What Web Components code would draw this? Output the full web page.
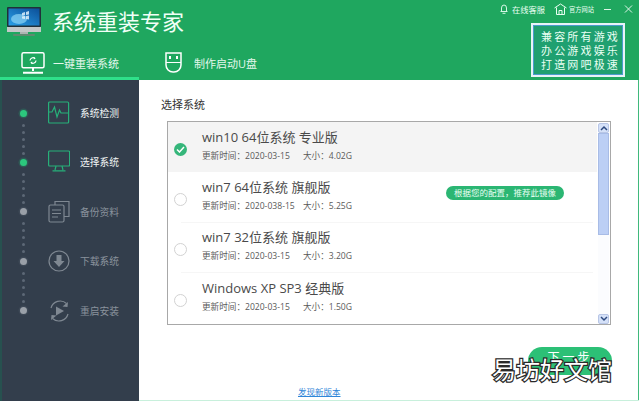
<!DOCTYPE html>
<html lang="zh"><head><meta charset="utf-8"><title>系统重装专家</title>
<style>
html,body{margin:0;padding:0;background:#fff}
body{width:639px;height:401px;overflow:hidden;font-family:"Open Sans","Noto Sans CJK SC",sans-serif}
</style></head><body>
<installer-app>
  <app-header slot="header"></app-header>
  <side-nav slot="nav"></side-nav>
  <system-panel slot="main">
    <system-row slot="rows" selected name="win10 64位系统 专业版" date="2020-03-15" size="4.02G"></system-row>
    <system-row slot="rows" name="win7 64位系统 旗舰版" date="2020-038-15" size="5.25G" badge="根据您的配置，推荐此镜像"></system-row>
    <system-row slot="rows" name="win7 32位系统 旗舰版" date="2020-03-15" size="3.20G"></system-row>
    <system-row slot="rows" last name="Windows XP SP3 经典版" date="2020-03-15" size="1.50G"></system-row>
  </system-panel>
</installer-app>
<script>
const FONT='"Open Sans","Noto Sans CJK SC",sans-serif';
class InstallerApp extends HTMLElement{constructor(){super();this.attachShadow({mode:'open'}).innerHTML=`<style>
:host{display:grid;grid-template-columns:139px 1fr;grid-template-rows:80px 321px;width:639px;height:401px;position:relative;overflow:hidden;background:#fff}
.h{grid-column:1/3;display:block}
.edge{position:absolute;right:0;top:80px;bottom:0;width:1px;background:#3fb97c}
.bot{position:absolute;left:139px;right:0;bottom:0;height:1px;background:#c8f0dc}
.wm{position:absolute;left:492px;top:354px;font:24px/30px "Noto Sans CJK SC",sans-serif;color:#fff;-webkit-text-stroke:2.500px #2a2a2a;paint-order:stroke fill;white-space:nowrap}
</style><div class="h"><slot name="header"></slot></div><slot name="nav"></slot><slot name="main"></slot><div class="edge"></div><div class="bot"></div><div class="wm">易坊好文馆</div>`}}
customElements.define('installer-app',InstallerApp);

class AppHeader extends HTMLElement{constructor(){super();this.attachShadow({mode:'open'}).innerHTML=`<style>
:host{display:flex;height:80px;background:#1fa75f;color:#fff;font-family:${FONT};box-sizing:border-box;justify-content:space-between}
.left{display:flex;flex-direction:column;width:400px}
.brand{display:flex;align-items:center;height:42px;padding:0 0 0 7px;box-sizing:border-box;gap:11px}
.brand b{font-weight:400;font-size:22px;line-height:30px;color:#f1fff7}
.tabs{display:flex;height:38px}
.tab{display:flex;align-items:center;box-sizing:border-box;font-size:11px;color:#e4f7ec}
.t1{width:139px;height:38px;padding:7px 0 0 21px;gap:8px;border-bottom:3px solid #2fe08a}
.t2{padding:3px 0 0 26px;gap:12px}
.right{display:flex;flex-direction:column;align-items:flex-end;width:200px}
.top{display:flex;align-items:center;height:18px;padding-right:6px;font-size:8.250px;color:#eafff3}
.top span{display:inline-flex;align-items:center}
.top .a{margin-right:9px;gap:4px}.top .b{margin-right:10px;font-size:6.250px;gap:2px}
.top .min{width:7px;height:1px;background:#dff5e8;margin-right:13px}
.promo{margin:5px 14px 0 0;width:94px;height:54px;box-sizing:border-box;border:2px solid #e6f3f8;outline:1.500px solid #4a9ccc;outline-offset:-3.500px;background:#1fa070;font-size:11px;line-height:14px;text-align:center;padding:5px 0 0 2px;letter-spacing:2.150px;color:#eafff3;white-space:nowrap}
.promo div{margin-right:-3px}
</style>
<div class="left"><div class="brand">
<svg width="34" height="29" viewBox="0 0 34 29"><rect x="0" y="0" width="34" height="20" rx="1" fill="#20303a"/><defs><linearGradient id="s" x1="0" y1="1" x2="1" y2="0"><stop offset="0" stop-color="#2aa0e8"/><stop offset="1" stop-color="#0c4f98"/></linearGradient></defs><rect x="1.500" y="1.500" width="31" height="17" fill="url(#s)"/><ellipse cx="12" cy="12" rx="8" ry="5" fill="#8fd6f6" opacity=".7"/><path d="M15 6l3-1v3l-3 .5zM19 5l3-1v3.500l-3 .5zM15 9.500l3-.5v3l-3-.5zM19 9l3-.5v4l-3-.5z" fill="#e8f6ff" opacity=".8"/><rect x="0" y="20" width="34" height="5" fill="#c4c8c8"/><rect x="13" y="25" width="8" height="2" fill="#aeb4b2"/><rect x="6" y="27" width="22" height="2" rx="1" fill="#5f8a70"/></svg>
<b>系统重装专家</b></div>
<div class="tabs"><div class="tab t1"><svg width="24" height="22" viewBox="0 0 24 22" fill="none" stroke="#fff" stroke-width="1.500"><rect x="1" y=".8" width="22" height="15" rx="1.500"/><path d="M12 16v3M2 20.800h20" stroke-width="2"/><path d="M9 8.500a3 3 0 0 1 5-2M15 8.500a3 3 0 0 1-5 2" stroke-width="1.200"/><path d="M13.500 5l1 2-2 .2zM10.500 12l-1-2 2-.2z" fill="#fff" stroke="none"/></svg><span>一键重装系统</span></div>
<div class="tab t2"><svg width="17" height="21" viewBox="0 0 17 21" fill="none" stroke="#fff" stroke-width="1.500"><path d="M1 1h15v12a7 7 0 0 1-7 7h-1a7 7 0 0 1-7-7z"/><path d="M1 10.500h15" stroke-width="1"/><path d="M5 4v3M12 4v3" stroke-width="2"/></svg><span>制作启动U盘</span></div></div></div>
<div class="right"><div class="top"><span class="a"><svg width="8" height="10" viewBox="0 0 8 10" fill="none" stroke="#eafff3" stroke-width=".9"><path d="M1.500 7V4a2.500 3 0 0 1 5 0v3M.500 7.500h7M2.500 9.300h3"/></svg>在线客服</span><span class="b"><svg width="13" height="12" viewBox="0 0 13 12" fill="none" stroke="#eafff3"><path d="M.500 5L6.500 1l6 4M2.500 4.500v7h8v-7M5 11V7.500h3V11"/></svg>官方网站</span><i class="min"></i><svg width="9" height="8" viewBox="0 0 9 8" stroke="#dff5e8" stroke-width="1"><path d="M1 .5l7 7M8 .5l-7 7"/></svg></div>
<div class="promo"><div>兼容所有游戏</div><div>办公游戏娱乐</div><div>打造网吧极速</div></div></div>`}}
customElements.define('app-header',AppHeader);

const ICONS={
check:`<rect x=".6" y="1" width="20" height="21" rx="1"/><path d="M.6 11H4l2.500-5 2.500 10 2.500-7 1.500 3h7.600"/>`,
mon:`<rect x=".6" y="1" width="21" height="15" rx="1"/><path d="M8 16l-1 4M14 16l1 4M4.500 20.800h13"/>`,
copy:`<path d="M7 5V1.500h14v15h-5"/><rect x="1" y="5" width="15" height="17" rx="1.500"/><path d="M4 10h9M4 13.500h9M4 17h6"/>`,
down:`<circle cx="11" cy="12" r="10"/><path d="M8.500 6h5v6h3l-5.500 6-5.500-6h3z" fill="currentColor" stroke="none"/>`,
play:`<path d="M3 9a9.500 9.500 0 0 1 15.500-4.500M20 15a9.500 9.500 0 0 1-15.500 4.500"/><path d="M20 3l-.5 5-5-.5zM3 21l.5-5 5 .5z" fill="currentColor" stroke="none"/><path d="M8 7.500l8 4.500-8 4.500z" fill="currentColor" stroke="none"/>`};
class SideNav extends HTMLElement{constructor(){super();
const items=[['系统检测','check',1],['选择系统','mon',1],['备份资料','copy',0],['下载系统','down',0],['重启安装','play',0]];
const r=this.attachShadow({mode:'open'});
r.innerHTML=`<style>
:host{display:block;background:#333e4c;border-left:2px solid #27514f;box-sizing:border-box;font-family:${FONT};height:321px;padding-top:20px}
.item{display:flex;align-items:center;height:26px;margin-bottom:23.400px;font-size:9.750px;color:#8a929c;position:relative}
.on{color:#f0f4f4}
.dot{width:7px;height:7px;border-radius:50%;background:#9aa0a8;margin-left:17.500px;box-shadow:0 0 0 1.500px #3d4856;flex:none}
.on .dot{background:#2cc77d;box-shadow:0 0 0 1.500px #2f5a56}
svg{margin-left:21.500px;margin-right:10px;color:#7f8892;stroke:#7f8892;flex:none}
.on svg{color:#27b079;stroke:#27b079}
.trail{position:absolute;left:19.500px;top:23.500px;display:flex;flex-direction:column;gap:4px}
.trail i{display:block;width:3px;height:3px;border-radius:50%;background:#5d6876}
</style>`+items.map(([t,ic,on],i)=>`<div class="item ${on?'on':''}"><span class="dot"></span><svg width="22" height="24" viewBox="0 0 22 24" fill="none" stroke-width="1.200">${ICONS[ic]}</svg><span>${t}</span>${i<4?`<div class="trail">${'<i></i>'.repeat(5)}</div>`:''}</div>`).join('');
}}
customElements.define('side-nav',SideNav);

class SystemPanel extends HTMLElement{constructor(){super();this.attachShadow({mode:'open'}).innerHTML=`<style>
:host{display:block;position:relative;font-family:${FONT};height:321px;padding:17px 0 0 22px;box-sizing:border-box;color:#444}
h2{margin:0 0 8px;font-weight:400;font-size:11px;line-height:16px;color:#333}
.list{display:flex;margin-left:6px;width:444px;height:204px;box-sizing:border-box;border:1px solid #a8a8a8}
.rows{flex:1;min-width:0}
.sb{width:11px;background:#fbfcfe;display:flex;flex-direction:column;align-items:center;margin:1px 1px 0 0}
.arrow{width:11px;height:10px;box-sizing:border-box;background:#d5e1f8;border:1px solid #b8c6e6;border-radius:2px;display:flex;align-items:center;justify-content:center}
.thumb{width:11px;height:102px;background:#bccff5;border:1px solid #a8bce6;box-sizing:border-box}
.track{flex:1}
.next{position:absolute;left:389px;top:267px;width:84px;height:28px;border-radius:14px;background:#2cc076;color:#fff;font-size:12px;line-height:21px;text-align:center;letter-spacing:3px}
.link{position:absolute;left:159px;top:306px;font-size:8.500px;line-height:12px;color:#2f86d8;text-decoration:underline}
</style><h2>选择系统</h2><div class="list"><div class="rows"><slot name="rows"></slot></div><div class="sb"><div class="arrow"><svg width="8" height="6" viewBox="0 0 8 6" fill="none" stroke="#2d4a80" stroke-width="1.500"><path d="M1 5l3-3 3 3"/></svg></div><div class="thumb"></div><div class="track"></div><div class="arrow"><svg width="8" height="6" viewBox="0 0 8 6" fill="none" stroke="#2d4a80" stroke-width="1.500"><path d="M1 1l3 3 3-3"/></svg></div></div></div><div class="next">下一步</div><div class="link">发现新版本</div>`}}
customElements.define('system-panel',SystemPanel);

class SystemRow extends HTMLElement{constructor(){super();
const g=n=>this.getAttribute(n)||'';const sel=this.hasAttribute('selected');
this.attachShadow({mode:'open'}).innerHTML=`<style>
:host{display:block}
.row{display:flex;align-items:center;height:50.300px;padding-left:6px;box-sizing:border-box;margin-right:1px;position:relative;background:${sel?'#f4f4f4':'#fff'}}
.line{position:absolute;left:13px;right:4px;bottom:0;height:1px;background:#f6f6f6}
.radio{width:13px;height:13px;border-radius:50%;box-sizing:border-box;border:1.500px solid #d2d2d2;flex:none;margin-right:15px;margin-top:4px}
.sel{border:0;background:#35b67a;display:flex;align-items:center;justify-content:center}
.t{font-size:13px;line-height:18px;color:#4a4a4a;white-space:nowrap}
.m{font-size:8.600px;line-height:12px;margin-top:4px;color:#5a5a5a;white-space:nowrap;display:flex}
.m span:first-child{width:101px}
.txt{margin-top:-5px}
.badge{position:absolute;left:278px;top:14px;width:118px;height:14px;border-radius:7px;background:#2bb673;color:#eafff3;font-size:8.500px;line-height:14px;text-align:center;white-space:nowrap}
</style><div class="row"><div class="radio ${sel?'sel':''}">${sel?'<svg width="9" height="7" viewBox="0 0 9 7" fill="none" stroke="#fff" stroke-width="1.500"><path d="M1 3.500l2.500 2.500L8 1"/></svg>':''}</div><div class="txt"><div class="t">${g('name')}</div><div class="m"><span>更新时间：${g('date')}</span><span>大小：${g('size')}</span></div></div>${g('badge')?`<div class="badge">${g('badge')}</div>`:''}${this.hasAttribute('last')||sel?'':'<div class="line"></div>'}</div>`}}
customElements.define('system-row',SystemRow);
</script>
</body></html>
